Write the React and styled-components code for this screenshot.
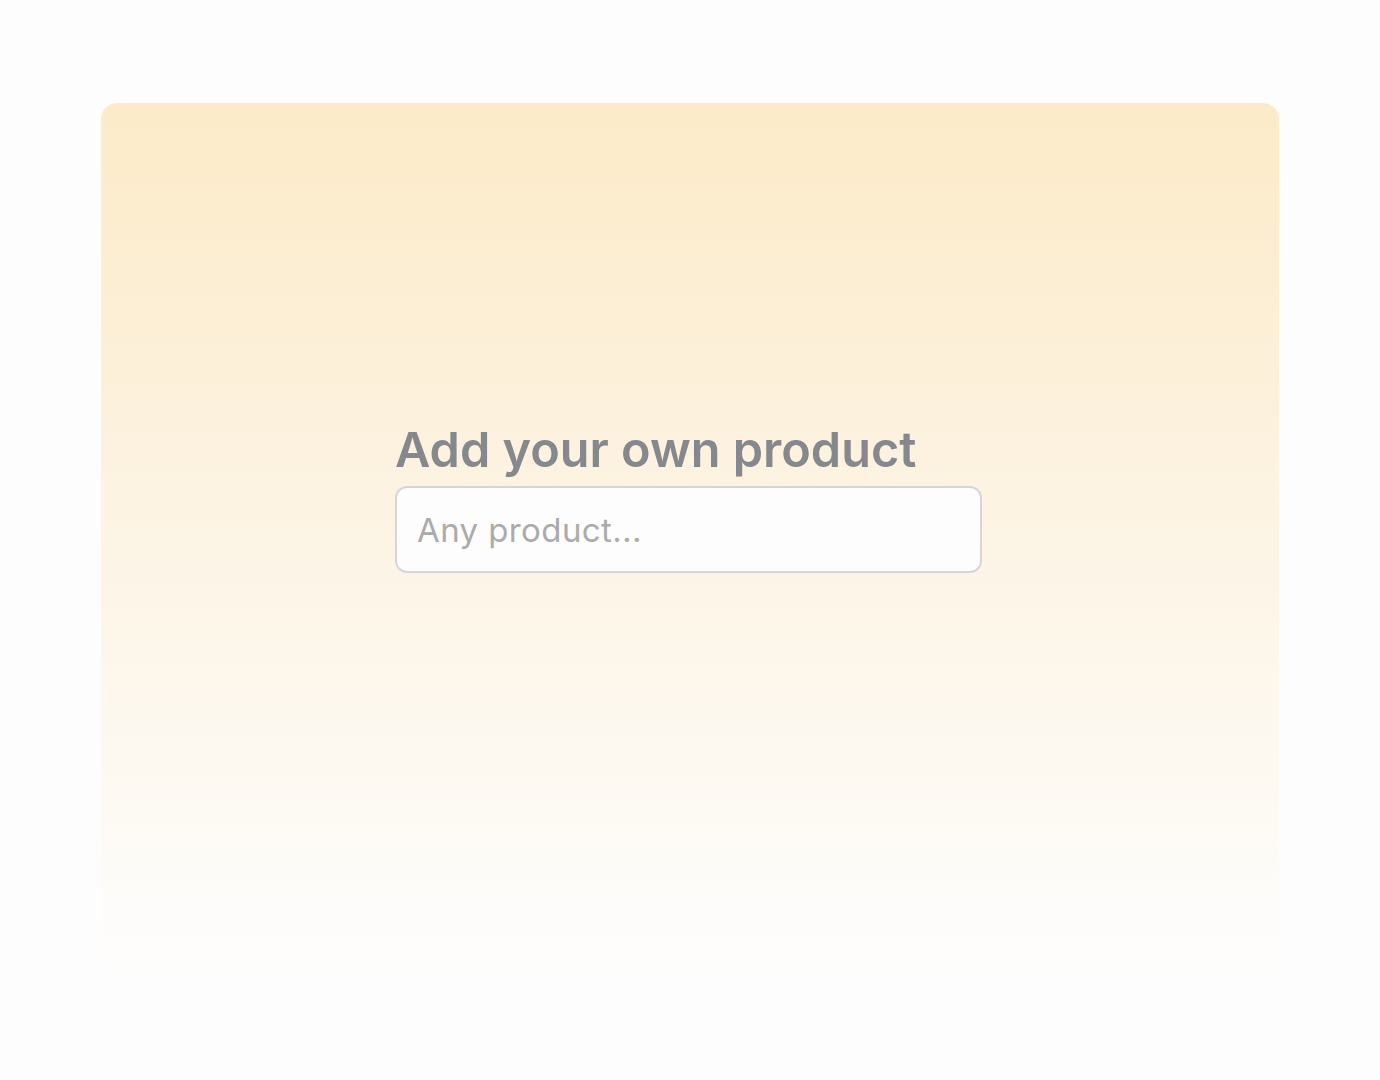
import React from 'react';
import styled, { createGlobalStyle } from 'styled-components';

const GlobalStyle = createGlobalStyle`
  html, body {
    margin: 0;
    padding: 0;
    background: #fdfdfd;
    font-family: Inter, "Noto Sans", sans-serif;
  }
`;

function App() {
  return (
    <>
      <GlobalStyle />
      <Page>
        <Card>
          <Form>
            <Title>Add your own product</Title>
            <Input placeholder='Any product...' />
          </Form>
        </Card>
      </Page>
    </>
  );
}

export default App;

const Page = styled.div`
  width: 1380px;
  height: 1080px;
  box-sizing: border-box;
  padding: 103px 101px 104px 101px;
`;

const Card = styled.div`
  height: 100%;
  border-radius: 16px;
  background: linear-gradient(
    180deg,
    #fcebc8 0%,
    #fcefd6 25%,
    #fcf3e2 45%,
    #fdf7ec 65%,
    #fdfaf3 80%,
    #fdfcfa 92%,
    #fdfdfc 100%
  );
  display: flex;
  justify-content: center;
  padding: 319px 3px 0 0;
  box-sizing: border-box;
`;

const Form = styled.div`
  width: 587px;
  display: flex;
  flex-direction: column;
  gap: 8px;
`;

const Title = styled.h2`
  margin: 0;
  font-size: 48.6px;
  font-weight: 600;
  line-height: 56px;
  letter-spacing: 0px;
  color: #85888c;
`;

const Input = styled.input`
  height: 87px;
  box-sizing: border-box;
  border: 2px solid #d6d6da;
  border-radius: 12px;
  background: #fdfdfd;
  padding: 0 20px;
  font-family: Inter, "Noto Sans", sans-serif;
  font-size: 33px;
  font-weight: 400;
  letter-spacing: 0.4px;
  color: #555;
  outline: none;

  &::placeholder {
    color: #ababab;
  }
`;
